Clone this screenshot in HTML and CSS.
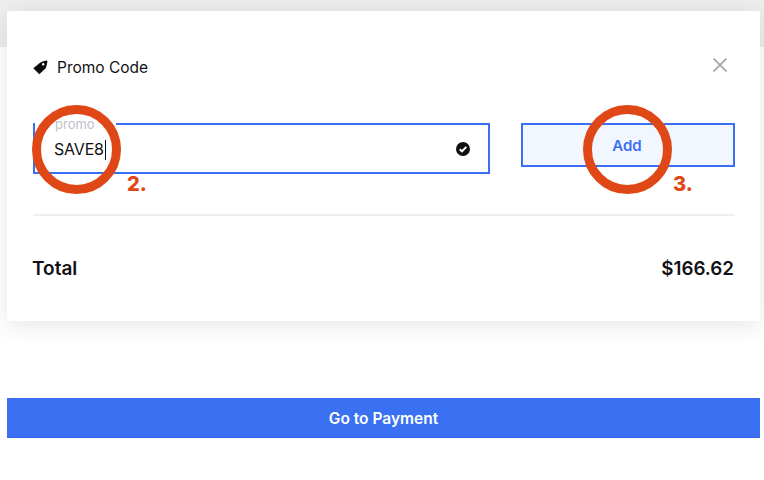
FILE: index.html
```html
<!DOCTYPE html>
<html lang="en">
<head>
<meta charset="utf-8">
<title>Promo Code</title>
<link rel="stylesheet" href="styles.css">
</head>
<body>
<div class="backdrop"></div>
<main class="page">
  <div class="card-wrap">
    <section class="card">
      <header class="card-head">
        <div class="title">
          <svg class="tag" viewBox="0 0 15 15" width="15" height="15"><path d="M0.3 8.3 L7 2.7 Q10 1 13.7 0.6 Q14.6 0.7 14.4 1.7 Q13.9 5.3 12.7 8.3 L6.3 14.2 Z" fill="#0b0b0d"/><circle cx="10.2" cy="4.2" r="1.2" fill="#fff"/></svg>
          <span>Promo Code</span>
        </div>
        <svg class="close" viewBox="0 0 14 14" width="14" height="14"><path d="M0.5 0.5 L13.5 13.5 M13.5 0.5 L0.5 13.5" stroke="#a3a4ad" stroke-width="1.7" fill="none"/></svg>
      </header>
      <div class="promo-row">
        <div class="field">
          <div class="field-text">
            <span class="field-label">promo</span>
            <span class="field-value">SAVE8<i class="caret"></i></span>
          </div>
          <svg class="check" viewBox="0 0 14 14" width="14" height="14"><circle cx="7" cy="7" r="7" fill="#111113"/><path d="M3.8 7.2 L6 9.4 L10.3 4.9" stroke="#fff" stroke-width="2" fill="none"/></svg>
        </div>
        <button class="add">Add</button>
      </div>
      <div class="total">
        <span class="total-label">Total</span>
        <span class="total-value">$166.62</span>
      </div>
    </section>
  </div>
  <div class="pay-area">
    <button class="pay">Go to Payment</button>
  </div>
</main>
<div class="ring ring-one"></div>
<div class="ring ring-two"></div>
<span class="step step-two">2.</span>
<span class="step step-three">3.</span>
</body>
</html>
```
FILE: styles.css
```css
* { box-sizing: border-box; }
html, body { margin: 0; height: 100%; background: #fff; overflow: hidden; }
body { position: relative; font-family: "Inter", "Liberation Sans", sans-serif; color: #111113; }
.backdrop { position: absolute; left: 0; right: 0; top: 0; height: 47px; background: #eeeeee; }
.page { position: relative; }
.card-wrap { padding: 11px 4px 0 7px; }
.card {
  background: #fff;
  height: 310px;
  padding: 41px 25px 0 26px;
  box-shadow: 0 4px 24px rgba(0, 0, 0, 0.1);
}
.card-head { display: flex; justify-content: space-between; align-items: flex-start; height: 71px; }
.title { display: flex; align-items: center; gap: 9px; font-size: 15.5px; height: 30px; }
.tag { width: 15px; height: 15px; }
.close { margin: 6px 8px 0 0; }
.promo-row { display: flex; align-items: flex-start; gap: 31px; padding-bottom: 40px; border-bottom: 2px solid #eeeeee; }
.field {
  width: 457px; height: 51px; flex: none;
  display: flex; justify-content: space-between; align-items: center;
  border: 2px solid #3a6ff5;
  padding: 0 18px 0 19px;
}
.field-text { display: flex; flex-direction: column; margin-top: -21px; }
.field-label {
  align-self: flex-start;
  margin-left: -19px; padding: 0 21px 0 20px;
  font-size: 13px; line-height: 15px; color: #c0c0c6;
  background: #fff;
}
.field-value { font-size: 16px; line-height: 19px; margin-top: 8px; letter-spacing: -0.2px; display: flex; align-items: center; }
.caret { width: 1px; height: 20px; background: #111; margin-left: 1px; }
.add {
  flex: 1; height: 44px; padding: 0 2px 0 0;
  background: #f2f6fe; border: 2px solid #3a6ff5;
  color: #3a6ff5; font: 600 15px "Inter", "Liberation Sans", sans-serif;
}
.total { display: flex; justify-content: space-between; align-items: center; margin: 38px 1px 0 -1px; font-weight: 600; font-size: 19px; line-height: 30px; }
.total-value { font-size: 18.8px; }
.pay-area { position: relative; margin-top: 21px; padding: 56px 4px 0 7px; background: #fff; }
.pay {
  display: block; width: 100%; height: 40px; padding: 1px 0 0;
  background: #3a71f2; border: 0; border-bottom: 1px solid #3264e8; color: #fff;
  font: 600 15.5px "Inter", "Liberation Sans", sans-serif;
}
.ring { position: absolute; width: 89px; height: 89px; border: 9px solid #df4816; border-radius: 50%; }
.ring-one { left: 32px; top: 105px; }
.ring-two { left: 583px; top: 105px; }
.step { position: absolute; color: #df4816; font-weight: 800; font-size: 20px; line-height: 24px; }
.step-two { left: 127px; top: 172px; }
.step-three { left: 673px; top: 172px; }
```
